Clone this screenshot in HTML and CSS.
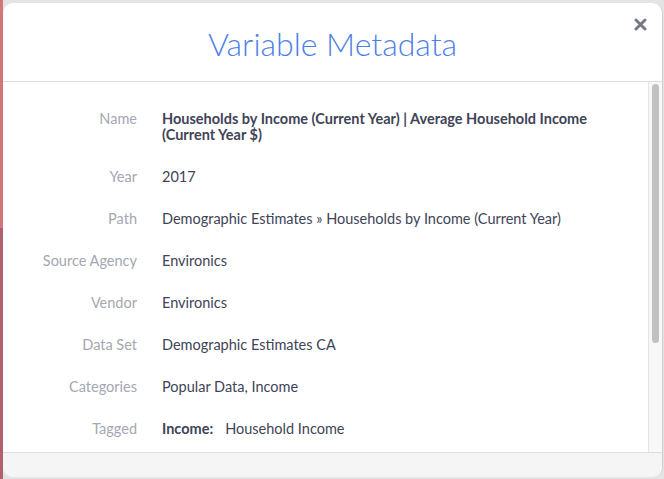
FILE: index.html
```html
<!DOCTYPE html>
<html>
<head>
<meta charset="utf-8">
<link rel="stylesheet" href="styles.css">
</head>
<body>
<div class="modal">
  <div class="modal-header">
    <h1 class="title">Variable Metadata</h1>
    <button class="close" aria-label="Close">
      <svg width="13" height="13" viewBox="0 0 13 13"><path d="M2 2 L11 11 M11 2 L2 11" stroke="#767a87" stroke-width="3" stroke-linecap="round"/></svg>
    </button>
  </div>
  <div class="modal-body">
    <div class="content">
      <div class="row"><div class="label">Name</div><div class="value strong">Households by Income (Current Year) | Average Household Income (Current Year $)</div></div>
      <div class="row"><div class="label">Year</div><div class="value">2017</div></div>
      <div class="row"><div class="label">Path</div><div class="value">Demographic Estimates » Households by Income (Current Year)</div></div>
      <div class="row"><div class="label">Source Agency</div><div class="value">Environics</div></div>
      <div class="row"><div class="label">Vendor</div><div class="value">Environics</div></div>
      <div class="row"><div class="label">Data Set</div><div class="value">Demographic Estimates CA</div></div>
      <div class="row"><div class="label">Categories</div><div class="value">Popular Data, Income</div></div>
      <div class="row"><div class="label">Tagged</div><div class="value"><span class="tag-key">Income:</span>Household Income</div></div>
    </div>
    <div class="scrollbar"><div class="thumb"></div></div>
  </div>
  <div class="modal-footer"></div>
</div>
</body>
</html>
```
FILE: styles.css
```css
html, body {
  margin: 0;
  padding: 0;
  height: 479px;
  overflow: hidden;
}
body {
  font-family: Lato, "Open Sans", sans-serif;
  background:
    linear-gradient(to bottom, #d4757c 0, #d4757c 228px, #b2606f 228px, #b2606f 100%) no-repeat 0 0 / 3px 100%,
    #e4e4e4;
  padding: 3px 1px 2px 3px;
  box-sizing: border-box;
}
.modal {
  height: 474px;
  background: #fff;
  border-radius: 10px;
  border-right: 1px solid #cfcfcf;
  display: flex;
  flex-direction: column;
  overflow: hidden;
}
.modal-header {
  height: 78px;
  border-bottom: 1px solid #dcdcdc;
  display: flex;
  align-items: center;
  justify-content: center;
  position: relative;
  flex: none;
}
.title {
  margin: 0;
  font-weight: 300;
  font-size: 32px;
  color: #4c80e8;
  letter-spacing: 0;
  padding-top: 2px;
}
.close {
  position: absolute;
  right: 15px;
  top: 15px;
  border: 0;
  background: none;
  padding: 0;
  width: 13px;
  height: 13px;
}
.close svg { display: block; }
.modal-body {
  flex: 1;
  display: flex;
  min-height: 0;
  border-bottom: 1px solid #dcdcdc;
}
.content {
  flex: 1;
  overflow: hidden;
  padding-top: 16px;
}
.row {
  display: flex;
  padding: 13px 0;
  font-size: 14.5px;
  line-height: 16px;
}
.label {
  width: 134px;
  flex: none;
  text-align: right;
  color: #a4a7b2;
  padding-right: 25px;
  box-sizing: content-box;
}
.value {
  color: #404457;
  padding-right: 50px;
}
.value.strong { font-weight: 700; }
.tag-key {
  font-weight: 700;
  margin-right: 12px;
}
.scrollbar {
  width: 14px;
  flex: none;
  background: #f8f8f8;
  border-left: 1px solid #e4e4e4;
  padding: 2px 3px 0 3px;
  box-sizing: border-box;
}
.thumb {
  height: 259px;
  background: #c1c1c1;
  border-radius: 4px;
}
.modal-footer {
  height: 24px;
  flex: none;
  background: #f5f5f5;
}
```
